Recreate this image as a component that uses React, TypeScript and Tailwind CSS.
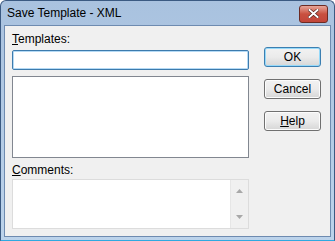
import React from 'react';

const font = { fontFamily: '"Liberation Sans", Arial, sans-serif' };

const Btn: React.FC<{ children: React.ReactNode; primary?: boolean }> = ({ children, primary }) => (
  <button
    className={`w-[57px] h-[20px] rounded-[3px] border text-[12px] leading-none text-black bg-gradient-to-b from-[#f2f2f2] via-[#ebebeb] to-[#d6d6d6] ${
      primary ? 'border-[#3c7fb1] shadow-[inset_0_0_0_1px_#96d9f9]' : 'border-[#707070] shadow-[inset_0_0_0_1px_#fcfcfc]'
    }`}
  >
    {children}
  </button>
);

export default function App() {
  return (
    <div className="w-[335px] h-[241px] bg-white" style={font}>
      <div className="w-full h-full rounded-t-[6px] border border-[#3b5a82] bg-gradient-to-b from-[#a9c2df] to-[#bcd3eb] flex flex-col px-[3px] pb-[3px] border-b-[#2fa9e0]">
        <div className="h-[24px] flex items-center justify-between pl-[3px] pr-[3px] shrink-0">
          <span className="text-[12px] text-black">Save Template - XML</span>
          <div className="w-[29px] h-[18px] mt-[1px] rounded-[3px] border border-[#6d2b23] bg-gradient-to-b from-[#e6a59a] via-[#c9503f] to-[#c2463a] flex items-center justify-center">
            <svg width="11" height="9" viewBox="0 0 11 9">
              <path d="M1.5 1 L9.5 8 M9.5 1 L1.5 8" stroke="#4a1a14" strokeWidth="3.2" strokeLinecap="square" />
              <path d="M1.5 1 L9.5 8 M9.5 1 L1.5 8" stroke="#ffffff" strokeWidth="2" strokeLinecap="square" />
            </svg>
          </div>
        </div>
        <div className="flex-1 border border-[#6e8bb0] bg-[#f0f0f0] flex pl-[7px] pr-[9px] pt-[6px]">
          <div className="w-[237px] flex flex-col">
            <div className="text-[12px] leading-[15px] text-black h-[18px]">
              <span className="underline">T</span>emplates:
            </div>
            <div className="h-[20px] bg-white border border-[#3d7bad] shadow-[inset_0_0_0_1px_#b5daf5] rounded-[2px]" />
            <div className="h-[82px] mt-[6px] bg-white border border-[#828790]" />
            <div className="text-[12px] leading-[15px] text-black h-[15px] pt-[5px] box-content">
              <span className="underline">C</span>omments:
            </div>
            <div className="h-[50px] mt-[1px] bg-white border border-[#dcdcdc] flex justify-end">
              <div className="w-[18px] h-full bg-[#f0f0f0] border-l border-[#e6e6e6] flex flex-col items-center justify-between py-[9px]">
                <svg width="7" height="4" viewBox="0 0 7 4"><path d="M0 4 L3.5 0 L7 4 Z" fill="#a8a8a8" /></svg>
                <svg width="7" height="4" viewBox="0 0 7 4"><path d="M0 0 L3.5 4 L7 0 Z" fill="#a8a8a8" /></svg>
              </div>
            </div>
          </div>
          <div className="flex-1 flex flex-col items-end gap-[12px] pt-[15px]">
            <Btn primary>OK</Btn>
            <Btn>Cancel</Btn>
            <Btn>
              <span className="underline">H</span>elp
            </Btn>
          </div>
        </div>
      </div>
    </div>
  );
}
